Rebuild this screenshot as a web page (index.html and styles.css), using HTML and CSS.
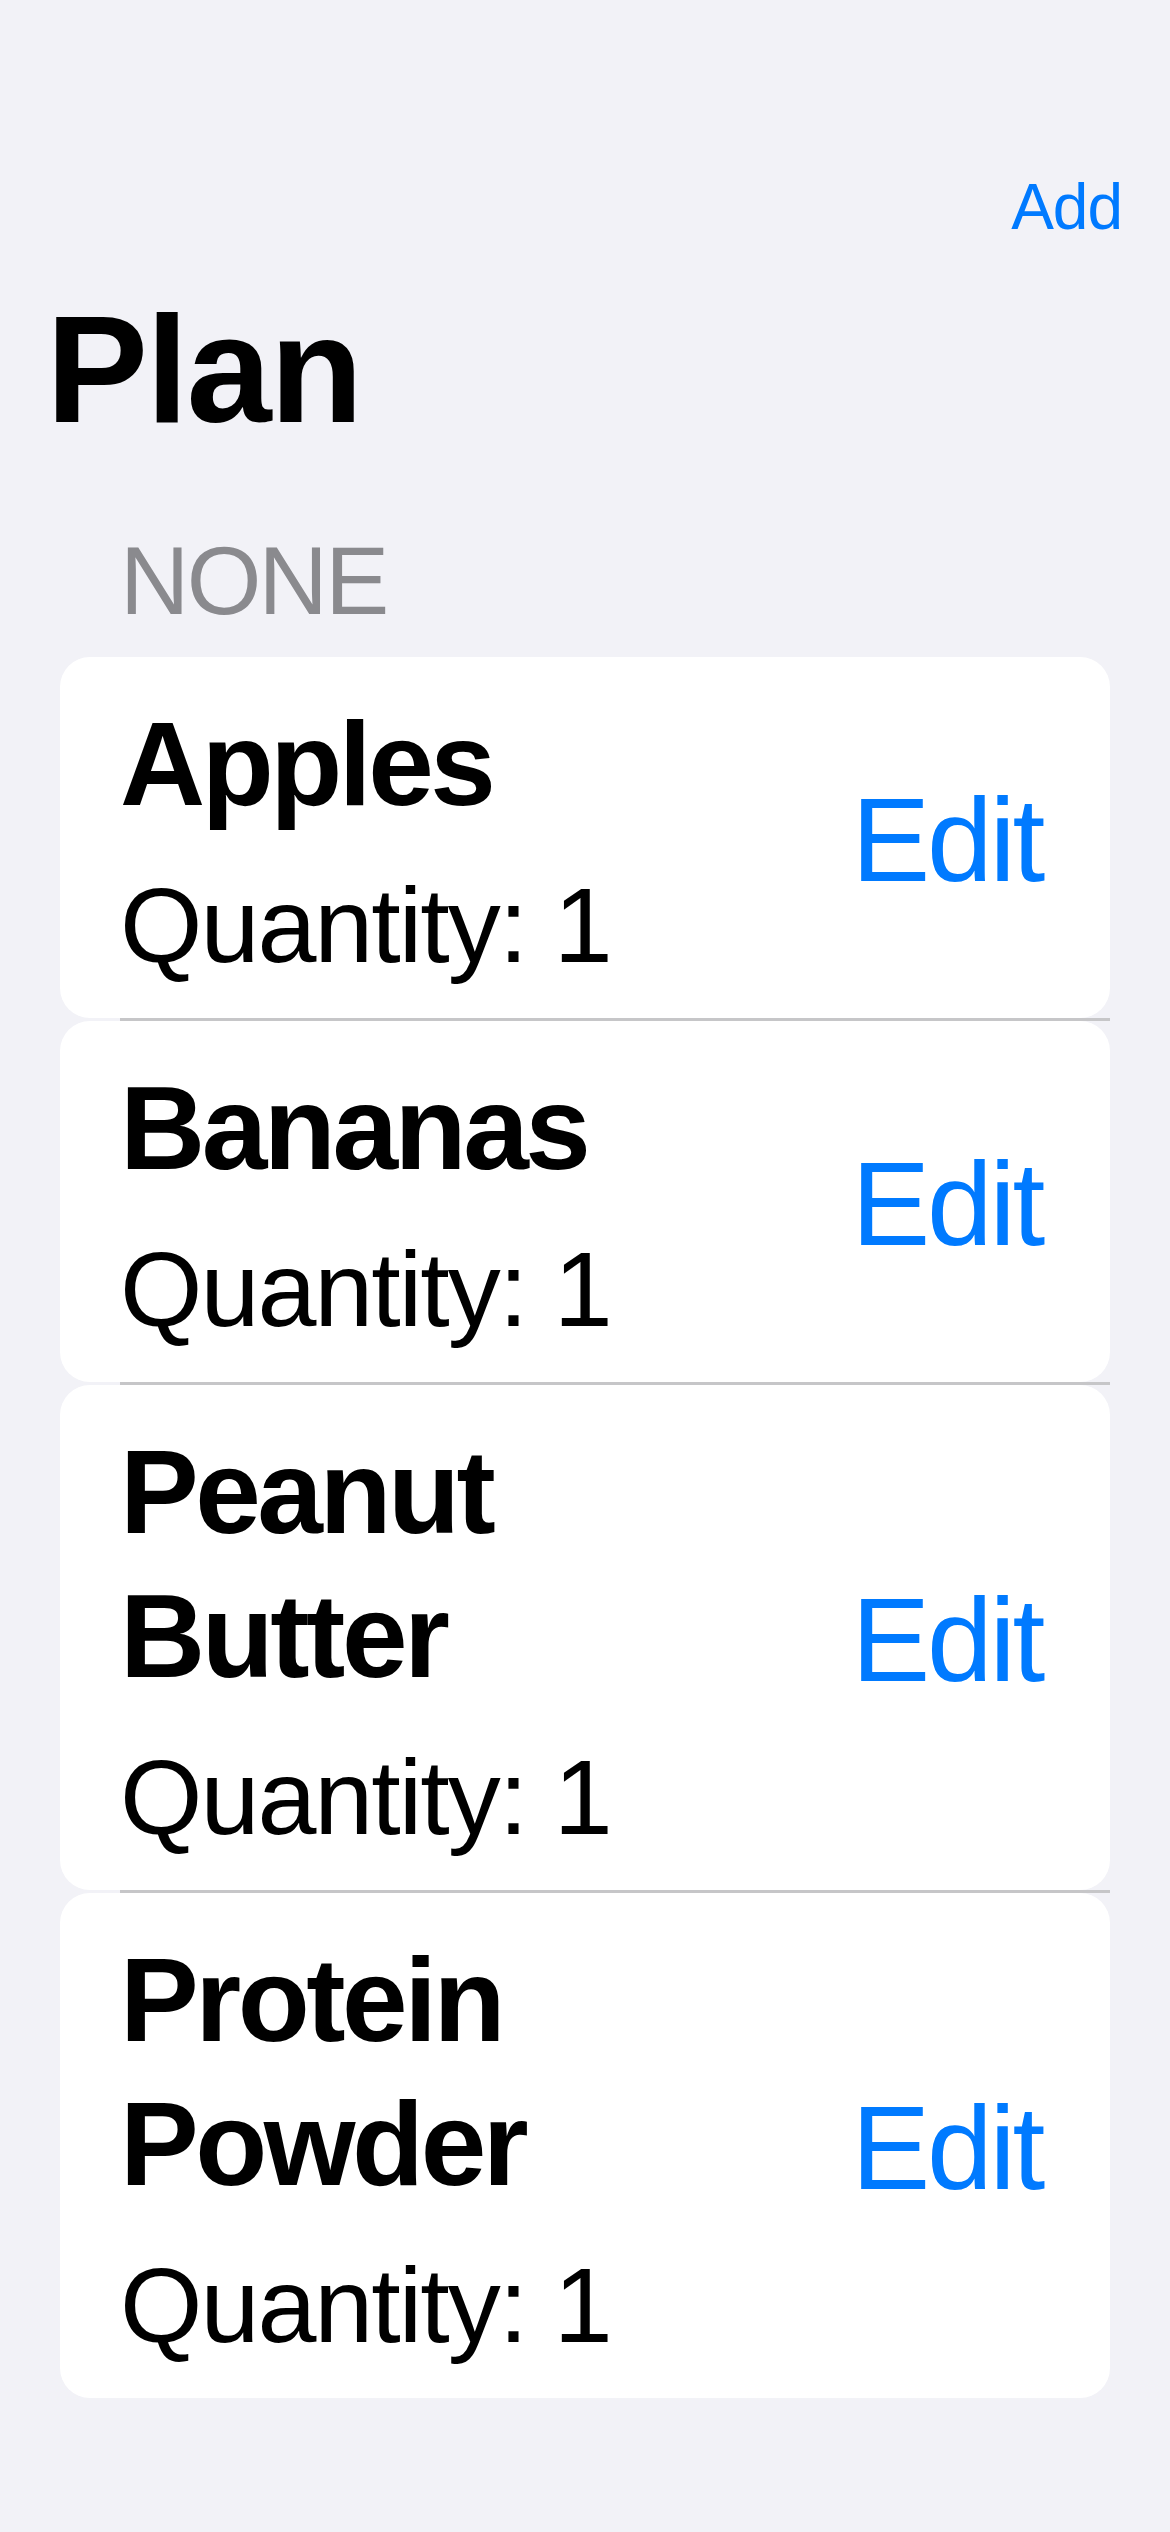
FILE: index.html
```html
<!DOCTYPE html>
<html lang="en">
<head>
<meta charset="utf-8">
<title>Plan</title>
<link rel="stylesheet" href="styles.css">
</head>
<body>
<div class="screen">
  <div class="nav"><span class="add">Add</span></div>
  <h1 class="title">Plan</h1>
  <div class="section-header">NONE</div>
  <div class="list">
    <div class="row">
      <div class="info">
        <div class="name">Apples</div>
        <div class="qty">Quantity: 1</div>
      </div>
      <div class="edit">Edit</div>
    </div>
    <div class="sep"></div>
    <div class="row">
      <div class="info">
        <div class="name">Bananas</div>
        <div class="qty">Quantity: 1</div>
      </div>
      <div class="edit">Edit</div>
    </div>
    <div class="sep"></div>
    <div class="row">
      <div class="info">
        <div class="name">Peanut Butter</div>
        <div class="qty">Quantity: 1</div>
      </div>
      <div class="edit">Edit</div>
    </div>
    <div class="sep"></div>
    <div class="row">
      <div class="info">
        <div class="name">Protein Powder</div>
        <div class="qty">Quantity: 1</div>
      </div>
      <div class="edit">Edit</div>
    </div>
  </div>
</div>
</body>
</html>
```
FILE: styles.css
```css
html, body {
  margin: 0;
  padding: 0;
}
body {
  background: #f2f2f7;
  font-family: "Liberation Sans", Arial, sans-serif;
  color: #000;
  min-height: 2532px;
}
.screen {
  width: 1170px;
  padding-top: 169px;
}
.nav {
  display: flex;
  justify-content: flex-end;
  padding-right: 48px;
  height: 76px;
  line-height: 76px;
}
.add {
  font-size: 64px;
  color: #007aff;
  letter-spacing: -1px;
}
.title {
  margin: 34px 0 0 46px;
  font-size: 153px;
  font-weight: 700;
  line-height: 180px;
  letter-spacing: -2px;
}
.section-header {
  margin-top: 66px;
  padding-left: 120px;
  font-size: 96px;
  line-height: 112px;
  color: #8a8a8e;
  letter-spacing: -2.7px;
}
.list {
  margin: 20px 60px 0 60px;
}
.row {
  display: flex;
  align-items: center;
  gap: 40px;
  background: #fff;
  border-radius: 30px;
  padding: 35px 68px 31px 60px;
}
.info {
  flex: 1;
  min-width: 0;
}
.name {
  font-size: 118px;
  font-weight: 700;
  line-height: 144px;
  letter-spacing: -3.5px;
}
.qty {
  margin-top: 27px;
  font-size: 106px;
  line-height: 124px;
  letter-spacing: -2px;
}
.edit {
  flex: none;
  font-size: 118px;
  line-height: 144px;
  color: #007aff;
  letter-spacing: -3.2px;
}
.sep {
  height: 3px;
  margin-left: 60px;
  background: #c6c6c8;
}
```
